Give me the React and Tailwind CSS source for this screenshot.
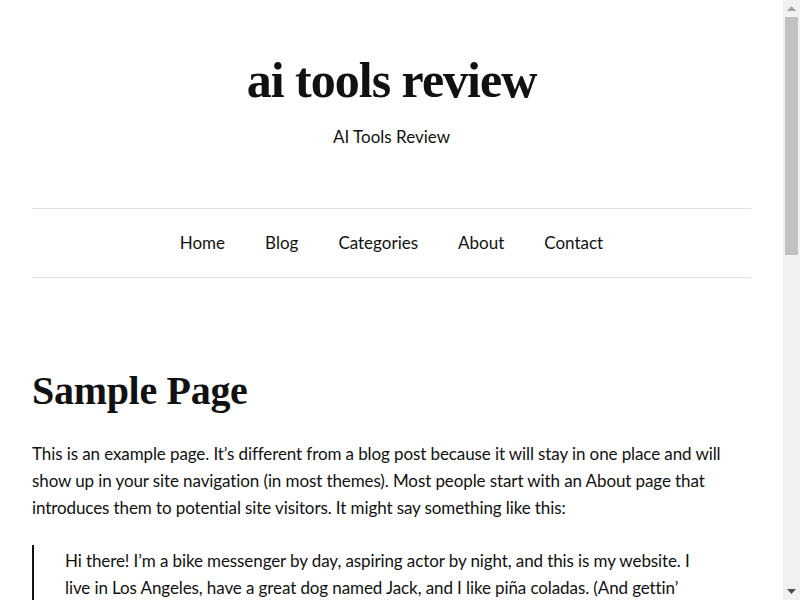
function ScrollBar() {
    return (
        <div className="w-[17px] h-[600px] shrink-0 bg-[#f1f1f1] flex flex-col">
            <div className="h-[17px] flex items-center justify-center">
                <svg width="9" height="5" viewBox="0 0 9 5">
                    <polygon points="4.5,0 9,5 0,5" fill="#a3a3a3" />
                </svg>
            </div>
            <div className="flex-1 px-[2px]">
                <div className="h-[238px] bg-[#c1c1c1]" />
            </div>
            <div className="h-[17px] flex items-center justify-center">
                <svg width="9" height="5" viewBox="0 0 9 5">
                    <polygon points="0,0 9,0 4.5,5" fill="#505050" />
                </svg>
            </div>
        </div>
    )
}

export default function App() {
    const body = { fontFamily: "Lato, 'Noto Sans', sans-serif" }
    const serif = { fontFamily: "'Liberation Serif', 'DejaVu Serif', serif" }

    return (
        <div className="flex h-[600px] overflow-hidden bg-white">
            <div className="flex-1 min-w-0 text-[#111111] px-8" style={body}>
                <header className="pt-[50px] text-center">
                    <h1 className="text-[50px] leading-[60px] font-bold tracking-[-1px]" style={serif}>
                        ai tools review
                    </h1>
                    <p className="mt-[14px] text-[17px] leading-[26px]">AI Tools Review</p>
                </header>

                <nav className="mt-[58px] border-y border-[#e0e0e0] h-[70px] flex items-center justify-center gap-10 text-[17px]">
                    <a href="#">Home</a>
                    <a href="#">Blog</a>
                    <a href="#">Categories</a>
                    <a href="#">About</a>
                    <a href="#">Contact</a>
                </nav>

                <main className="pt-[88px]">
                    <h2 className="text-[40px] leading-[50px] font-bold tracking-[-0.3px]" style={serif}>
                        Sample Page
                    </h2>

                    <div className="mt-[24px] text-[17px] leading-[27px] tracking-[-0.1px] space-y-6">
                        <p>
                            This is an example page. It’s different from a blog post because it will stay in one
                            place and will show up in your site navigation (in most themes). Most people start
                            with an About page that introduces them to potential site visitors. It might say
                            something like this:
                        </p>

                        <blockquote className="border-l-2 border-[#111111] pl-[31px] pr-[32px] pt-[2px]">
                            <p>
                                Hi there! I’m a bike messenger by day, aspiring actor by night, and this is my
                                website. I live in Los Angeles, have a great dog named Jack, and I like piña
                                coladas. (And gettin’ caught in the rain.)
                            </p>
                        </blockquote>

                        <p>…or something like this:</p>

                        <blockquote className="border-l-2 border-[#111111] pl-[31px] pr-[32px] pt-[2px]">
                            <p>
                                The XYZ Doohickey Company was founded in 1971, and has been providing quality
                                doohickeys to the public ever since. Located in Gotham City, XYZ employs over 2,000
                                people and does all kinds of awesome things for the Gotham community.
                            </p>
                        </blockquote>

                        <p>
                            As a new WordPress user, you should go to your dashboard to delete this page and
                            create new pages for your content. Have fun!
                        </p>
                    </div>
                </main>
            </div>
            <ScrollBar />
        </div>
    )
}
